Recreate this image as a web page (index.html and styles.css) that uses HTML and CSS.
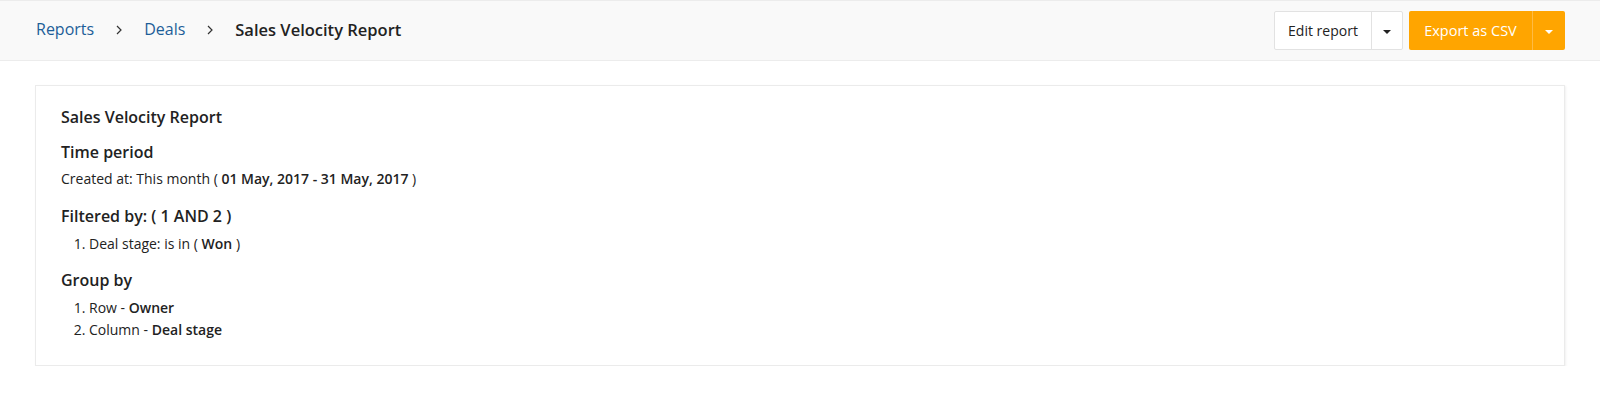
FILE: index.html
```html
<!DOCTYPE html>
<html lang="en">
<head>
    <meta charset="UTF-8" />
    <title>Sales Velocity Report</title>
    <link rel="stylesheet" href="styles.css">
</head>
<body>
    <header class="topbar">
        <nav class="crumbs">
            <a href="#">Reports</a>
            <svg class="sep" width="6" height="10" viewBox="0 0 6 10"><path d="M1 1l4 4-4 4" fill="none" stroke="#333" stroke-width="1.2"/></svg>
            <a href="#">Deals</a>
            <svg class="sep" width="6" height="10" viewBox="0 0 6 10"><path d="M1 1l4 4-4 4" fill="none" stroke="#333" stroke-width="1.2"/></svg>
            <span class="current">Sales Velocity Report</span>
        </nav>
        <div class="actions">
            <div class="btn-group btn-light">
                <button class="btn-main">Edit report</button>
                <button class="btn-caret"><span class="caret"></span></button>
            </div>
            <div class="btn-group btn-orange">
                <button class="btn-main">Export as CSV</button>
                <button class="btn-caret"><span class="caret"></span></button>
            </div>
        </div>
    </header>

    <section class="card">
        <h2 class="card-title">Sales Velocity Report</h2>

        <h3>Time period</h3>
        <p class="line">Created at: This month ( <b>01 May, 2017 - 31 May, 2017</b> )</p>

        <h3>Filtered by: ( 1 AND 2 )</h3>
        <ol>
            <li>Deal stage: is in ( <b>Won</b> )</li>
        </ol>

        <h3>Group by</h3>
        <ol>
            <li>Row - <b>Owner</b></li>
            <li>Column - <b>Deal stage</b></li>
        </ol>
    </section>
</body>
</html>
```

FILE: styles.css
```css
body {
    margin: 0;
    background-color: #fff;
    color: #222;
    font-family: "Open Sans", Lato, sans-serif;
}

.topbar {
    display: flex;
    justify-content: space-between;
    align-items: center;
    height: 59px;
    padding: 0 35px 0 36px;
    background-color: #f9f9f9;
    border-top: 1px solid #ececec;
    border-bottom: 1px solid #ececec;
}

.crumbs {
    display: flex;
    align-items: center;
    font-size: 16px;
    margin-top: -3px;
}

.crumbs a {
    color: #1d5e98;
    text-decoration: none;
}

.crumbs .sep {
    margin: 2px 22px 0 22px;
}

.crumbs .current {
    font-weight: 600;
    color: #222;
    font-size: 16.5px;
}

.actions {
    display: flex;
    gap: 6px;
}

.btn-group {
    display: flex;
    height: 39px;
    border-radius: 2px;
    box-sizing: border-box;
}

.btn-group button {
    border: none;
    background: none;
    font-family: inherit;
    font-size: 14px;
    cursor: pointer;
    padding: 0;
}

.btn-light {
    background-color: #fff;
    border: 1px solid #e2e2e2;
}

.btn-light .btn-main {
    width: 97px;
    color: #222;
    border-right: 1px solid #e2e2e2;
}

.btn-light .btn-caret {
    width: 30px;
}

.btn-light .caret {
    border-top-color: #222;
}

.btn-orange {
    background-color: #ffa500;
}

.btn-orange .btn-main {
    width: 124px;
    color: #fff;
    font-size: 14.5px;
    border-right: 1px solid #ffbb44;
}

.btn-orange .btn-caret {
    width: 32px;
}

.caret {
    display: inline-block;
    width: 0;
    height: 0;
    border-left: 4px solid transparent;
    border-right: 4px solid transparent;
    border-top: 4px solid #fff;
    vertical-align: middle;
}

.card {
    margin: 24px 35px 0 35px;
    padding: 21px 25px 24px 25px;
    border: 1px solid #ebebeb;
    box-shadow: 1px 1px 2px rgba(0, 0, 0, 0.06);
}

.card-title {
    margin: 0;
    font-size: 16px;
    line-height: 20px;
    font-weight: 600;
}

h3 {
    margin: 15px 0 0 0;
    font-size: 16px;
    line-height: 20px;
    font-weight: 600;
}

.line {
    margin: 8px 0 0 0;
    font-size: 14px;
    line-height: 18px;
}

b {
    font-weight: 600;
}

ol {
    margin: 7px 0 0 0;
    padding-left: 28px;
    font-size: 14px;
    line-height: 22px;
}

h3 + ol + h3 {
    margin-top: 15px;
}

.line + h3 {
    margin-top: 18px;
}
```
